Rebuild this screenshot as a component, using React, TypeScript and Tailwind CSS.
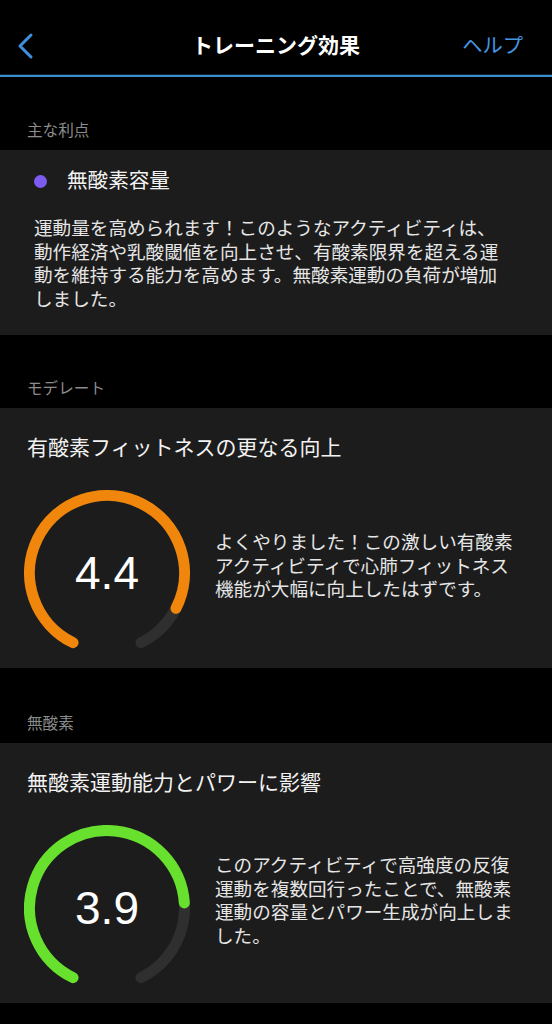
const JP = "font-['Liberation_Sans','Noto_Sans_CJK_JP',sans-serif]";

const R = 77.5;
const START = 206;
const SWEEP = 308;

function polar(deg: number) {
  const rad = (deg * Math.PI) / 180;
  return [83 + R * Math.sin(rad), 83 - R * Math.cos(rad)];
}

function arc(start: number, end: number) {
  const [x1, y1] = polar(start);
  const [x2, y2] = polar(end);
  const large = end - start > 180 ? 1 : 0;
  return `M ${x1} ${y1} A ${R} ${R} 0 ${large} 1 ${x2} ${y2}`;
}

function Gauge({ value, color }: { value: number; color: string }) {
  const end = START + (SWEEP * value) / 5;
  return (
    <div className="relative h-[166px] w-[166px] shrink-0">
      <svg width="166" height="166" viewBox="0 0 166 166">
        <path
          d={arc(START, START + SWEEP)}
          fill="none"
          stroke="#2f2f2f"
          strokeWidth="11"
          strokeLinecap="round"
        />
        <path
          d={arc(START, end)}
          fill="none"
          stroke={color}
          strokeWidth="11"
          strokeLinecap="round"
        />
      </svg>
      <div className="absolute inset-0 flex items-center justify-center font-['Liberation_Sans',Arial,sans-serif] text-[46px] leading-none text-white">
        {value.toFixed(1)}
      </div>
    </div>
  );
}

function SectionLabel({ text, h }: { text: string; h: string }) {
  return (
    <div className={`flex items-end px-[27px] pb-[8px] ${h}`}>
      <span className="text-[15.6px] leading-[22px] text-[#8c8c8c]">{text}</span>
    </div>
  );
}

function EffectCard({
  title,
  value,
  color,
  text,
}: {
  title: string;
  value: number;
  color: string;
  text: string;
}) {
  return (
    <div className="bg-[#1c1c1c] pt-[26px] pb-[12px]">
      <div className="px-[27px] text-[21px] leading-[28px] text-[#f2f2f2]">{title}</div>
      <div className="mt-[28px] flex items-center pl-[24px]">
        <Gauge value={value} color={color} />
        <p className="mb-[14px] ml-[25px] w-[305px] text-[18.6px] leading-[23.6px] text-[#e6e6e6]">
          {text}
        </p>
      </div>
    </div>
  );
}

export default function App() {
  return (
    <div className={`min-h-[1024px] w-full bg-black ${JP}`}>
      <header className="h-[74px] pt-[18px]">
        <div className="grid h-[56px] grid-cols-[1fr_auto_1fr] items-center">
          <div className="pl-[16px]">
            <svg width="18" height="28" viewBox="0 0 18 28">
              <path
                d="M15 3 L4 14 L15 25"
                fill="none"
                stroke="#3f8fe0"
                strokeWidth="3"
                strokeLinecap="round"
                strokeLinejoin="round"
              />
            </svg>
          </div>
          <h1 className="text-[21px] font-bold leading-[28px] text-white">トレーニング効果</h1>
          <div className="pr-[29px] text-right text-[20.3px] leading-[28px] text-[#4596e0]">
            ヘルプ
          </div>
        </div>
      </header>
      <div className="h-px bg-[#0c2436]" />
      <div className="h-[2px] bg-[#3b8dcc]" />

      <SectionLabel text="主な利点" h="h-[73px]" />
      <div className="bg-[#1c1c1c] pt-[17px] pb-[24px]">
        <div className="flex items-center pl-[34px]">
          <span className="h-[13px] w-[13px] rounded-full bg-[#7d5bf0]" />
          <span className="ml-[20px] text-[20.6px] leading-[28px] text-[#f2f2f2]">無酸素容量</span>
        </div>
        <p className="mt-[22px] pl-[34px] pr-[42px] text-[18.6px] leading-[23.6px] text-[#e6e6e6]">
          運動量を高められます！このようなアクティビティは、動作経済や乳酸閾値を向上させ、有酸素限界を超える運動を維持する能力を高めます。無酸素運動の負荷が増加しました。
        </p>
      </div>

      <SectionLabel text="モデレート" h="h-[73px]" />
      <EffectCard
        title="有酸素フィットネスの更なる向上"
        value={4.4}
        color="#f0860b"
        text="よくやりました！この激しい有酸素アクティビティで心肺フィットネス機能が大幅に向上したはずです。"
      />

      <SectionLabel text="無酸素" h="h-[75px]" />
      <EffectCard
        title="無酸素運動能力とパワーに影響"
        value={3.9}
        color="#68e02e"
        text="このアクティビティで高強度の反復運動を複数回行ったことで、無酸素運動の容量とパワー生成が向上しました。"
      />
    </div>
  );
}
